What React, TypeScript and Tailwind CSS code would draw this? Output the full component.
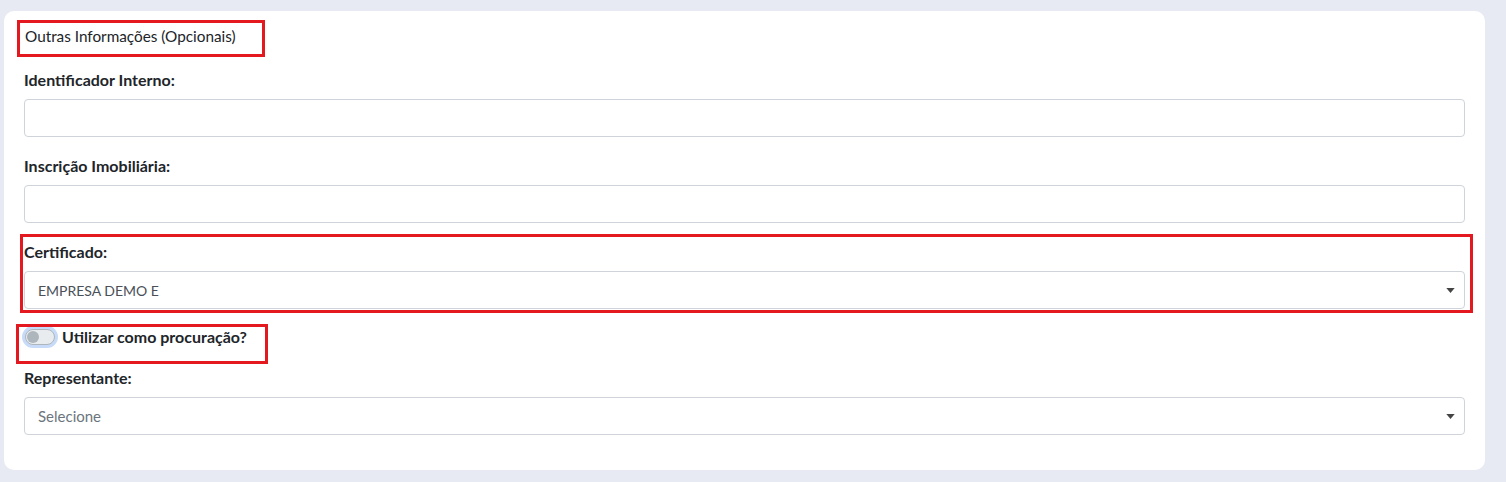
import React from 'react';

const font = { fontFamily: '"Lato", "Liberation Sans", sans-serif' };

function Caret() {
  return (
    <svg viewBox="0 0 10 6" className="w-[9px] h-[5px]" aria-hidden="true">
      <path d="M0 0H10L5 6Z" fill="#444" />
    </svg>
  );
}

function Field({ label, children }: { label: string; children: React.ReactNode }) {
  return (
    <div className="mb-[18px]">
      <label className="block text-[16px] leading-[22px] font-bold text-[#212529] mb-2">{label}</label>
      {children}
    </div>
  );
}

function TextInput() {
  return (
    <input
      type="text"
      className="block w-full h-[38px] bg-white border border-[#ced4da] rounded-[4px] px-[13px] text-[15px] text-[#495057] focus:outline-none"
    />
  );
}

function SelectBox({ value, placeholder }: { value: string; placeholder?: boolean }) {
  return (
    <div className="flex items-center justify-between h-[38px] bg-white border border-[#ced4da] rounded-[4px] pl-[13px] pr-[9px]">
      <span className={placeholder ? 'text-[15px] text-[#6c757d]' : 'text-[14px] text-[#495057]'}>{value}</span>
      <Caret />
    </div>
  );
}

export default function App() {
  return (
    <div className="w-[1506px] h-[482px] bg-[#e8eaf3] pt-[11px] pl-[4px]" style={font}>
      <div className="relative w-[1481px] h-[459px] bg-white rounded-[10px] pt-[14px] px-[20px]">
        {/* Header */}
        <h2 className="text-[15.3px] leading-[22px] font-normal text-[#212529] ml-px mb-[22px]">
          Outras Informações (Opcionais)
        </h2>

        <Field label="Identificador Interno:">
          <TextInput />
        </Field>

        <Field label="Inscrição Imobiliária:">
          <TextInput />
        </Field>

        <div>
          <label className="block text-[16px] leading-[22px] font-bold text-[#212529] mb-2">Certificado:</label>
          <SelectBox value="EMPRESA DEMO E" />
        </div>

        {/* Toggle */}
        <div className="flex items-center gap-[7px] h-[22px] mt-[17px] mb-[19px]">
          <span className="relative inline-flex items-center w-[30px] h-[16px] ml-[1px] rounded-full bg-[#e9ecef] border border-[#adb5bd] ring-[3px] ring-[#c7dbf8]">
            <span className="block w-[12px] h-[12px] ml-[1px] rounded-full bg-[#adb5bd]" />
          </span>
          <span className="text-[16px] font-bold text-[#212529]">Utilizar como procuração?</span>
        </div>

        <Field label="Representante:">
          <SelectBox value="Selecione" placeholder />
        </Field>

        {/* Annotation boxes */}
        <div className="absolute left-[13px] top-[9px] w-[248px] h-[37px] border-[3px] border-[#e3191f] pointer-events-none" />
        <div className="absolute left-[16px] top-[223px] w-[1453px] h-[79px] border-[3px] border-[#e3191f] pointer-events-none" />
        <div className="absolute left-[12px] top-[313px] w-[252px] h-[40px] border-[3px] border-[#e3191f] pointer-events-none" />
      </div>
    </div>
  );
}
